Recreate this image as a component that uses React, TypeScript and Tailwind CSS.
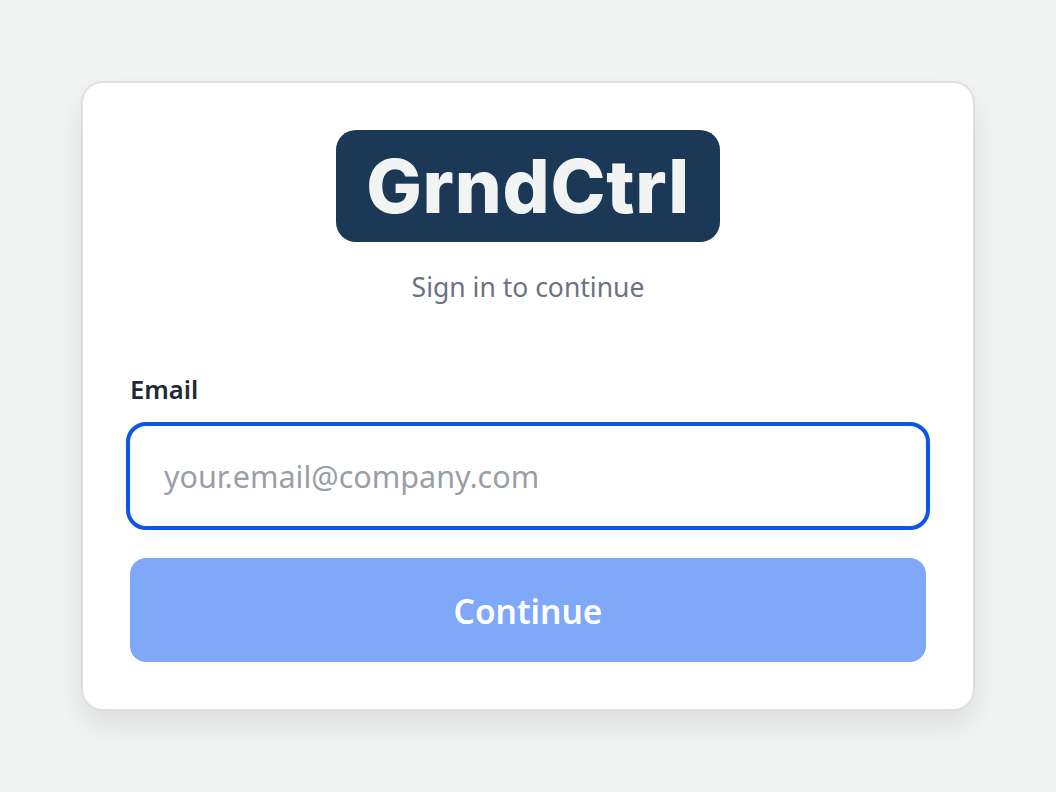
export default function App() {
  return (
    <div
      className="flex h-[792px] items-center justify-center bg-[#f2f4f3]"
      style={{ fontFamily: '"Noto Sans", "Open Sans", sans-serif' }}
    >
      <div className="w-[894px] rounded-[22px] border-2 border-[#dedfdf] bg-white p-[47px] shadow-[0_14px_30px_rgba(0,0,0,0.09)]">
        <div className="flex flex-col items-center">
          <div className="flex h-[112px] w-[384px] items-center justify-center rounded-[20px] bg-[#1b3856]">
            <span
              className="text-[74px] leading-none font-extrabold tracking-[0.75px] text-[#f2f4f3]"
              style={{ fontFamily: 'Inter, "Liberation Sans", sans-serif' }}
            >
              GrndCtrl
            </span>
          </div>
          <p className="mt-[27px] text-[26.5px] leading-[36px] text-[#6b7280]">Sign in to continue</p>
        </div>
        <label className="mt-[67px] block text-[25.6px] leading-[36px] font-semibold text-[#1f2937]">Email</label>
        <input
          placeholder="your.email@company.com"
          className="mt-[14px] -ml-[4px] block h-[108px] w-[804px] rounded-[20px] border-[4px] border-[#0b57e3] px-[34px] text-[30.5px] outline-none placeholder:text-[#9a9ea6]"
        />
        <button className="mt-[28px] flex h-[104px] w-full items-center justify-center rounded-[16px] bg-[#80a8f8] pt-[2px] text-[33.5px] font-semibold text-white">
          Continue
        </button>
      </div>
    </div>
  );
}
